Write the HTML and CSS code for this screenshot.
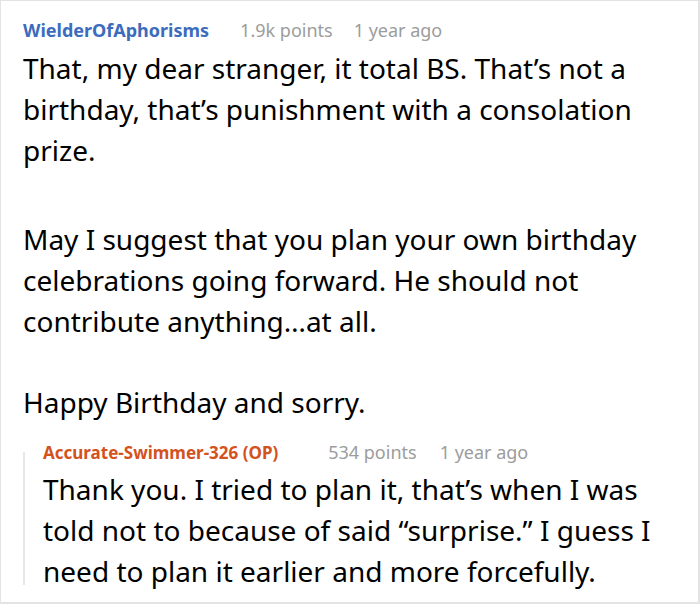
FILE: index.html
```html
<!DOCTYPE html>
<html>
<head>
<meta charset="utf-8">
<link rel="stylesheet" href="styles.css">
</head>
<body>
<div class="frame">
  <div class="comment">
    <div class="meta">
      <span class="user">WielderOfAphorisms</span>
      <span class="info points">1.9k points</span>
      <span class="info">1 year ago</span>
    </div>
    <div class="body">
      <p class="p1">That, my dear stranger, it total BS. That’s not a birthday, that’s punishment with a consolation prize.</p>
      <p class="p2">May I suggest that you plan your own birthday celebrations going forward. He should not contribute anything…at all.</p>
      <p class="p3">Happy Birthday and sorry.</p>
    </div>
    <div class="reply">
      <div class="meta">
        <span class="user">Accurate-Swimmer-326 (OP)</span>
        <span class="info points">534 points</span>
        <span class="info">1 year ago</span>
      </div>
      <div class="body">
        <p>Thank you. I tried to plan it, that’s when I was told not to because of said “surprise.” I guess I need to plan it earlier and more forcefully.</p>
      </div>
    </div>
  </div>
</div>
</body>
</html>
```

FILE: styles.css
```css
html, body {
  margin: 0;
  padding: 0;
  background: #ffffff;
}
.frame {
  box-sizing: border-box;
  width: 700px;
  height: 604px;
  border: 1px solid #e3e3e3;
  border-right-width: 2px;
  border-bottom-width: 2px;
  overflow: hidden;
  font-family: "Noto Sans", "Open Sans", sans-serif;
  color: #000;
}
.comment {
  padding: 17px 25px 0 22px;
}
.meta {
  display: flex;
  align-items: baseline;
  height: 30px;
  font-size: 18px;
  line-height: normal;
}
.user {
  font-weight: 700;
  color: #3b6cbe;
  margin-right: 31px;
}
.info {
  color: #9c9c9c;
}
.points {
  margin-right: 21px;
}
.body {
  font-size: 28px;
  line-height: 41px;
}
.body p {
  margin: 0;
}
.body .p1 {
  margin-bottom: 48px;
}
.body .p2 {
  margin-bottom: 40px;
}
.reply {
  position: relative;
  margin-top: 17px;
  padding-left: 20px;
}
.reply .meta {
  height: 29px;
}
.reply .user {
  font-size: 17px;
  color: #d3521e;
  margin-right: 50px;
}
.reply .points {
  margin-right: 23px;
}
.reply::before {
  content: "";
  position: absolute;
  left: 0;
  top: 12px;
  bottom: 7px;
  width: 2px;
  background: #e8e8e8;
}
```
